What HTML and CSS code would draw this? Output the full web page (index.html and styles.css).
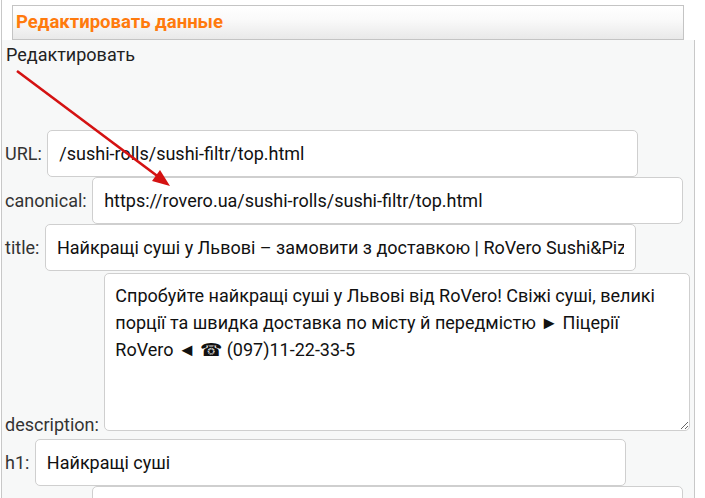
FILE: index.html
```html
<!DOCTYPE html>
<html lang="ru">
<head>
  <meta charset="UTF-8">
  <title>Редактировать данные</title>
  <link rel="stylesheet" href="styles.css">
</head>
<body>
<div class="wrap">
  <div class="headRow">
    <div class="head">Редактировать данные</div>
  </div>
  <div class="panel">
    <div class="panelTitle">Редактировать</div>
    <form class="seoForm">
      <div class="row"><label>URL:</label> <input class="field" type="text" value="/sushi-rolls/sushi-filtr/top.html"></div>
      <div class="row"><label>canonical:</label> <input class="field" type="text" value="https://rovero.ua/sushi-rolls/sushi-filtr/top.html"></div>
      <div class="row"><label>title:</label> <input class="field" type="text" value="Найкращі суші у Львові – замовити з доставкою | RoVero Sushi&amp;Pizza"></div>
      <div class="row rowArea"><label>description:</label> <textarea class="area">Спробуйте найкращі суші у Львові від RoVero! Свіжі суші, великі порції та швидка доставка по місту й передмістю ► Піцерії RoVero ◄ ☎ (097)11-22-33-5</textarea></div>
      <div class="row"><label>h1:</label> <input class="field" type="text" value="Найкращі суші"></div>
      <div class="row rowLast"><input class="field" type="text" value=""></div>
    </form>
    <svg class="arrow" width="200" height="200" viewBox="0 0 200 200">
      <line x1="15" y1="71" x2="158" y2="178" stroke="#d41212" stroke-width="2.6"/>
      <polygon points="168,186 150,181 158,170" fill="#d41212"/>
    </svg>
  </div>
</div>
</body>
</html>
```
FILE: styles.css
```css
body {
  margin: 0;
  background-color: #fff;
  font-family: Roboto, "Noto Sans", sans-serif;
  color: #222;
}

.wrap {
  width: 694px;
  margin-left: 1px;
}

.headRow {
  border-left: 1px solid #c8c8c8;
  padding: 5px 0 0 10px;
  height: 35px;
}

.head {
  box-sizing: border-box;
  width: 672px;
  height: 35px;
  border: 1px solid #c4c4c4;
  background: linear-gradient(#ffffff 0%, #fafafa 40%, #e9e9e9 100%);
  padding: 0 0 0 3px;
  font-family: Roboto, sans-serif;
  font-weight: bold;
  font-size: 18.5px;
  line-height: 32px;
  color: #ff7a0d;
}

.panel {
  position: relative;
  box-sizing: border-box;
  width: 694px;
  height: 458px;
  border-left: 1px solid #c8c8c8;
  border-right: 1px solid #c8c8c8;
  background-color: #f7f8f8;
  padding-left: 3px;
  overflow: hidden;
}

.panelTitle {
  font-family: Roboto, "Noto Sans", sans-serif;
  font-size: 18px;
  line-height: 30px;
  color: #222;
  padding-left: 1px;
}

.seoForm {
  margin: 60px 0 0 0;
}

.row {
  font-size: 18px;
  color: #333;
}

.rowArea {
  margin-bottom: 4px;
}

.rowLast {
  padding-left: 87px;
}

.row label {
  margin-right: 1px;
}

.field {
  box-sizing: border-box;
  width: 591px;
  height: 47px;
  margin: 0;
  padding: 0 11px;
  border: 1px solid #cfcfcf;
  border-radius: 5px;
  background-color: #fff;
  font-family: Roboto, sans-serif;
  font-size: 18px;
  color: #111;
  vertical-align: baseline;
}

.area {
  box-sizing: border-box;
  width: 586px;
  height: 158px;
  margin: 2px 0 0 0;
  padding: 8px 10px;
  border: 1px solid #cfcfcf;
  border-radius: 5px;
  background-color: #fff;
  font-family: Roboto, sans-serif;
  font-size: 18px;
  line-height: 27px;
  color: #111;
  vertical-align: baseline;
}

.arrow {
  position: absolute;
  left: 0;
  top: -40px;
}
```
